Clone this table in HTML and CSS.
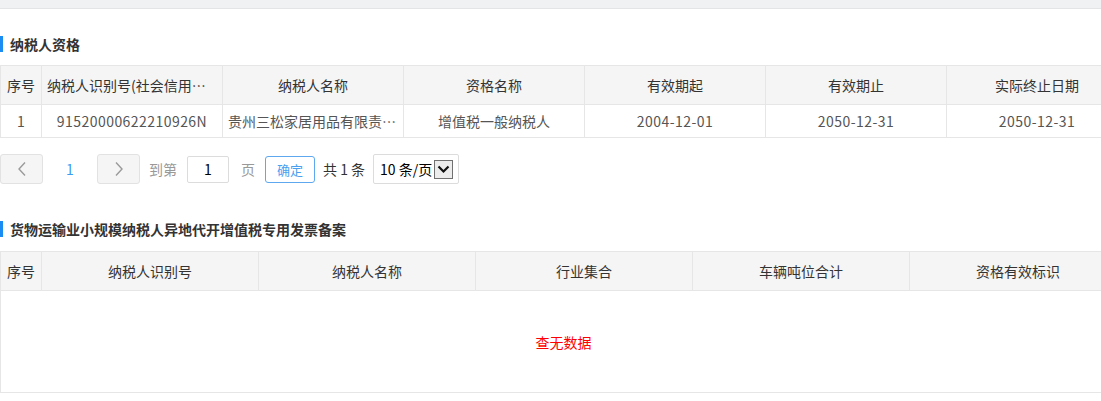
FILE: index.html
```html
<!DOCTYPE html>
<html lang="zh-CN">
<head>
<meta charset="utf-8">
<title>纳税人资格</title>
<link rel="stylesheet" href="styles.css">
</head>
<body>
<div class="page-root">
  <div class="topbar"></div>

  <div class="section-title first">纳税人资格</div>
  <div class="table-wrap">
    <table class="grid grid-a">
      <colgroup>
        <col class="c-idx"><col class="c-a"><col class="c-a"><col class="c-a"><col class="c-a"><col class="c-a"><col class="c-a">
      </colgroup>
      <thead>
        <tr>
          <th>序号</th>
          <th class="trunc">纳税人识别号(社会信用代码)</th>
          <th>纳税人名称</th>
          <th>资格名称</th>
          <th>有效期起</th>
          <th>有效期止</th>
          <th>实际终止日期</th>
        </tr>
      </thead>
      <tbody>
        <tr>
          <td>1</td>
          <td class="num">91520000622210926N</td>
          <td class="trunc">贵州三松家居用品有限责任公司</td>
          <td>增值税一般纳税人</td>
          <td class="num">2004-12-01</td>
          <td class="num">2050-12-31</td>
          <td class="num">2050-12-31</td>
        </tr>
      </tbody>
    </table>
  </div>

  <div class="pager">
    <button class="pg-btn" type="button" aria-label="上一页">
      <svg width="10" height="16" viewBox="0 0 10 16"><path d="M8 1.5 L2 8 L8 14.5" fill="none" stroke="#9a9a9a" stroke-width="1.4"/></svg>
    </button>
    <span class="pg-num">1</span>
    <button class="pg-btn" type="button" aria-label="下一页">
      <svg width="10" height="16" viewBox="0 0 10 16"><path d="M2 1.5 L8 8 L2 14.5" fill="none" stroke="#9a9a9a" stroke-width="1.4"/></svg>
    </button>
    <span class="pg-label pg-goto">到第</span>
    <span class="pg-input">1</span>
    <span class="pg-label pg-unit">页</span>
    <span class="pg-ok">确定</span>
    <span class="pg-total">共 1 条</span>
    <span class="pg-select">
      <span class="pg-select-text">10 条/页</span>
      <span class="pg-arrow">
        <svg width="13" height="9" viewBox="0 0 13 9"><path d="M1.5 1.5 L6.5 6.5 L11.5 1.5" fill="none" stroke="#111" stroke-width="2.2"/></svg>
      </span>
    </span>
  </div>

  <div class="section-title second">货物运输业小规模纳税人异地代开增值税专用发票备案</div>
  <div class="table-wrap">
    <table class="grid grid-b">
      <colgroup>
        <col class="c-idx"><col class="c-b"><col class="c-b"><col class="c-b"><col class="c-b"><col class="c-b">
      </colgroup>
      <thead>
        <tr>
          <th>序号</th>
          <th>纳税人识别号</th>
          <th>纳税人名称</th>
          <th>行业集合</th>
          <th>车辆吨位合计</th>
          <th>资格有效标识</th>
        </tr>
      </thead>
      <tbody>
        <tr>
          <td class="empty" colspan="6">查无数据</td>
        </tr>
      </tbody>
    </table>
  </div>
</div>
</body>
</html>
```

FILE: styles.css
```css
html, body {
  margin: 0;
  padding: 0;
  background: #fff;
}

body {
  font-family: "Noto Sans CJK SC", "Microsoft YaHei", "Liberation Sans", sans-serif;
  font-size: 14px;
  color: #333;
  overflow: hidden;
}

.page-root {
  width: 1101px;
  overflow: hidden;
}

.topbar {
  height: 8px;
  background: #f0f1f3;
  border-bottom: 1px solid #e3e4e6;
}

.section-title {
  height: 16px;
  line-height: 16px;
  border-left: 3px solid #1a8cf2;
  padding-left: 7px;
  font-size: 14px;
  font-weight: bold;
  color: #333;
  white-space: nowrap;
}

.section-title.first {
  margin-top: 27px;
  margin-bottom: 13px;
}

.section-title.second {
  margin-top: 37px;
  margin-bottom: 14px;
}

.table-wrap {
  width: 1101px;
  overflow: hidden;
}

.grid {
  border-collapse: collapse;
  table-layout: fixed;
  font-size: 14px;
}

.grid-a { width: 1127px; }
.grid-b { width: 1126px; }

.c-idx { width: 41px; }
.c-a { width: 181px; }
.c-b { width: 217px; }

.grid th,
.grid td {
  border: 1px solid #e6e6e6;
  padding: 0 5px;
  text-align: center;
  white-space: nowrap;
  overflow: hidden;
  text-overflow: ellipsis;
}

.grid th {
  height: 38px;
  background: #f5f5f5;
  font-weight: normal;
  color: #333;
}

.grid td {
  height: 32px;
  color: #555;
}

.grid td.num {
  letter-spacing: 0.45px;
}

.grid th:first-child,
.grid td:first-child {
  padding: 0;
}

.grid td.empty {
  height: 101px;
  color: #ff0000;
  font-size: 14px;
  padding: 0;
}

.pager {
  display: flex;
  align-items: center;
  height: 30px;
  margin-top: 16px;
  font-size: 14px;
}

.pg-btn {
  width: 43px;
  height: 30px;
  box-sizing: border-box;
  border: 1px solid #e2e2e2;
  border-radius: 3px;
  background: #f5f5f5;
  display: flex;
  align-items: center;
  justify-content: center;
  padding: 0;
  flex: none;
}

.pg-num {
  width: 54px;
  text-align: center;
  color: #3d9bf3;
}

.pg-label {
  color: #999;
  white-space: nowrap;
}

.pg-goto { margin-left: 9px; }
.pg-unit { margin-left: 12px; }

.pg-input {
  margin-left: 10px;
  width: 42px;
  height: 27px;
  box-sizing: border-box;
  border: 1px solid #dcdcdc;
  border-radius: 2px;
  display: flex;
  align-items: center;
  justify-content: center;
  color: #000;
  flex: none;
}

.pg-ok {
  margin-left: 10px;
  width: 50px;
  height: 27px;
  box-sizing: border-box;
  border: 1px solid #5ea8f0;
  border-radius: 3px;
  display: flex;
  align-items: center;
  justify-content: center;
  color: #4a9ff0;
  font-size: 13px;
  flex: none;
}

.pg-total {
  margin-left: 8px;
  color: #333;
  white-space: nowrap;
}

.pg-select {
  margin-left: 8px;
  width: 86px;
  height: 30px;
  box-sizing: border-box;
  border: 1px solid #dcdcdc;
  border-radius: 2px;
  display: flex;
  align-items: center;
  padding-left: 6px;
  color: #000;
  flex: none;
}

.pg-select-text {
  white-space: nowrap;
}

.pg-arrow {
  margin-left: 2px;
  width: 19px;
  height: 19px;
  box-sizing: border-box;
  border: 1px solid #707070;
  background: #ececec;
  display: flex;
  align-items: center;
  justify-content: center;
  flex: none;
}
```
